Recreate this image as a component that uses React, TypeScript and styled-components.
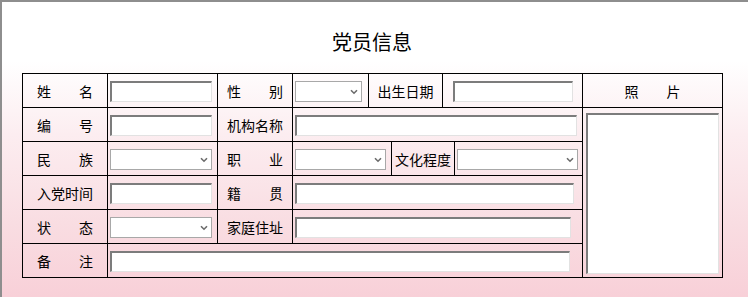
import * as React from "react";
import styled, { createGlobalStyle } from "styled-components";

const GlobalStyle = createGlobalStyle`
  body {
    margin: 0;
    background: #fff;
    font-family: "Noto Sans CJK SC", "Noto Sans", sans-serif;
  }
`;

const Window = styled.div`
  box-sizing: border-box;
  width: 748px;
  height: 297px;
  border-top: 2px solid #8e8e8e;
  border-left: 2px solid #8e8e8e;
  background: linear-gradient(
    to bottom,
    #ffffff 0%,
    #ffffff 20%,
    #fcedf0 45%,
    #f9dde2 75%,
    #f8d0d8 100%
  );
  padding: 26px 0 0 20px;
`;

const Content = styled.div`
  width: 700px;
`;

const Title = styled.h1`
  margin: 0 0 17px;
  font-size: 20px;
  line-height: 28px;
  font-weight: normal;
  text-align: center;
  color: #000;
`;

const FormTable = styled.table`
  width: 700px;
  table-layout: fixed;
  border-collapse: collapse;
  border: 1px solid #000;
  font-size: 14px;
  color: #000;
`;

const Col = styled.col<{ $w: number }>`
  width: ${(p) => p.$w}px;
`;

const Row = styled.tr`
  height: 34px;
`;

const Cell = styled.td<{ $center?: boolean }>`
  border: 1px solid #000;
  padding: 0 2px;
  vertical-align: middle;
  text-align: ${(p) => (p.$center ? "center" : "left")};
`;

const LabelCell = styled(Cell)`
  text-align: center;
  padding: 0;
`;

const LabelText = styled.span`
  display: inline-flex;
  justify-content: space-between;
  width: 56px;
  line-height: 20px;
`;

const PhotoCell = styled(Cell)`
  vertical-align: top;
  padding: 5px 3px 1px;
`;

const sunken = `
  box-sizing: border-box;
  border-style: solid;
  border-width: 2px 1px 1px 2px;
  border-color: #7c7c7c #e2e2e2 #e2e2e2 #7c7c7c;
  background: #fff;
`;

const TextBox = styled.input<{ $w: number }>`
  ${sunken}
  display: inline-block;
  vertical-align: middle;
  width: ${(p) => p.$w}px;
  height: 21px;
  margin: 0;
  padding: 0 2px;
  font: inherit;
  font-size: 13px;
  outline: none;
`;

const SelectWrap = styled.div<{ $w: number }>`
  position: relative;
  display: inline-block;
  vertical-align: middle;
  width: ${(p) => p.$w}px;
  height: 21px;
`;

const SelectBox = styled.select`
  appearance: none;
  box-sizing: border-box;
  display: block;
  width: 100%;
  height: 100%;
  margin: 0;
  border: 1px solid #a8a8a8;
  border-radius: 0;
  background: #fff;
  font: inherit;
  font-size: 13px;
  outline: none;
`;

const Chevron = styled.svg`
  position: absolute;
  right: 4px;
  top: 8px;
  pointer-events: none;
`;

const PhotoBox = styled.div`
  ${sunken}
  width: 133px;
  height: 161px;
`;

const Label = ({ text }: { text: string }) => (
  <LabelText>
    {[...text].map((c, i) => (
      <span key={i}>{c}</span>
    ))}
  </LabelText>
);

const Dropdown = ({ w }: { w: number }) => (
  <SelectWrap $w={w}>
    <SelectBox defaultValue="">
      <option value=""></option>
    </SelectBox>
    <Chevron width="8" height="6" viewBox="0 0 8 6">
      <path d="M1 1.2 L4 4.2 L7 1.2" fill="none" stroke="#6b6b6b" strokeWidth="1.6" />
    </Chevron>
  </SelectWrap>
);

// column edges: 22|107|217|292|368|391|442|454|582|722
const columns = [85, 110, 75, 76, 23, 51, 12, 128, 140];

const App = () => {
  return (
    <>
      <GlobalStyle />
      <Window>
        <Content>
          <Title>党员信息</Title>
          <FormTable>
            <colgroup>
              {columns.map((w, i) => (
                <Col key={i} $w={w} />
              ))}
            </colgroup>
            <tbody>
              <Row>
                <LabelCell>
                  <Label text="姓名" />
                </LabelCell>
                <Cell>
                  <TextBox $w={102} />
                </Cell>
                <LabelCell>
                  <Label text="性别" />
                </LabelCell>
                <Cell>
                  <Dropdown w={67} />
                </Cell>
                <LabelCell colSpan={2}>
                  <Label text="出生日期" />
                </LabelCell>
                <Cell colSpan={2} $center>
                  <TextBox $w={120} />
                </Cell>
                <LabelCell>
                  <Label text="照片" />
                </LabelCell>
              </Row>
              <Row>
                <LabelCell>
                  <Label text="编号" />
                </LabelCell>
                <Cell>
                  <TextBox $w={102} />
                </Cell>
                <LabelCell>
                  <Label text="机构名称" />
                </LabelCell>
                <Cell colSpan={5}>
                  <TextBox $w={282} />
                </Cell>
                <PhotoCell rowSpan={5}>
                  <PhotoBox />
                </PhotoCell>
              </Row>
              <Row>
                <LabelCell>
                  <Label text="民族" />
                </LabelCell>
                <Cell>
                  <Dropdown w={102} />
                </Cell>
                <LabelCell>
                  <Label text="职业" />
                </LabelCell>
                <Cell colSpan={2}>
                  <Dropdown w={91} />
                </Cell>
                <LabelCell colSpan={2}>
                  <Label text="文化程度" />
                </LabelCell>
                <Cell>
                  <Dropdown w={121} />
                </Cell>
              </Row>
              <Row>
                <LabelCell>
                  <Label text="入党时间" />
                </LabelCell>
                <Cell>
                  <TextBox $w={102} />
                </Cell>
                <LabelCell>
                  <Label text="籍贯" />
                </LabelCell>
                <Cell colSpan={5}>
                  <TextBox $w={279} />
                </Cell>
              </Row>
              <Row>
                <LabelCell>
                  <Label text="状态" />
                </LabelCell>
                <Cell>
                  <Dropdown w={102} />
                </Cell>
                <LabelCell>
                  <Label text="家庭住址" />
                </LabelCell>
                <Cell colSpan={5}>
                  <TextBox $w={276} />
                </Cell>
              </Row>
              <Row>
                <LabelCell>
                  <Label text="备注" />
                </LabelCell>
                <Cell colSpan={7}>
                  <TextBox $w={460} />
                </Cell>
              </Row>
            </tbody>
          </FormTable>
        </Content>
      </Window>
    </>
  );
};

export default App;
